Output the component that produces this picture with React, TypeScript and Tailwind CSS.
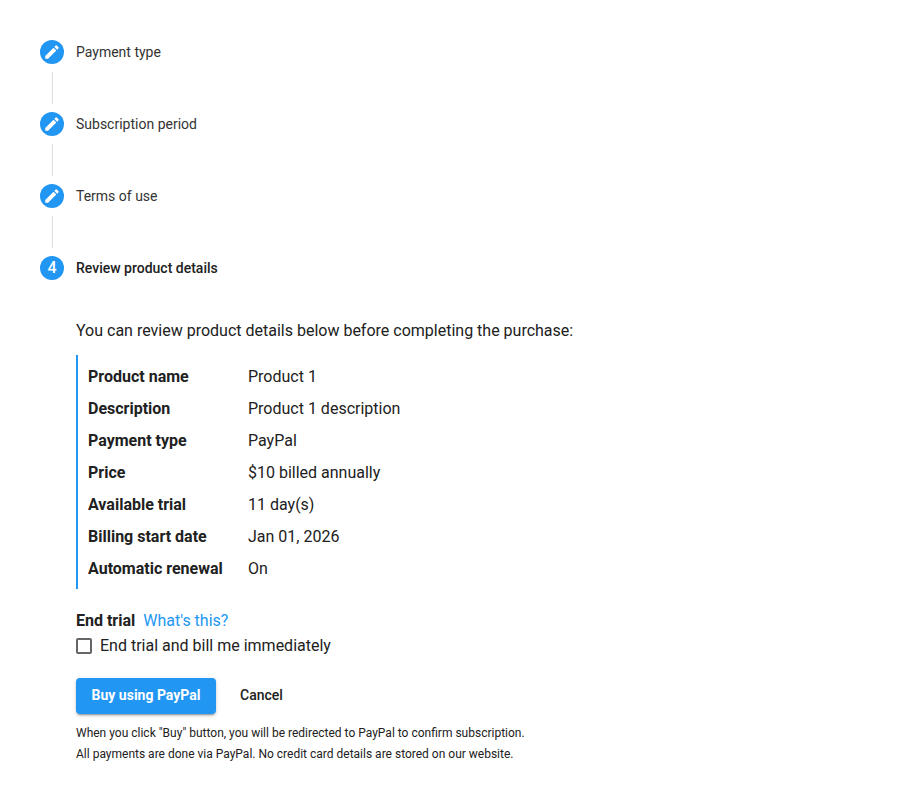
import React from 'react';

const rows = [
  ['Product name', 'Product 1'],
  ['Description', 'Product 1 description'],
  ['Payment type', 'PayPal'],
  ['Price', '$10 billed annually'],
  ['Available trial', '11 day(s)'],
  ['Billing start date', 'Jan 01, 2026'],
  ['Automatic renewal', 'On'],
];

const doneSteps = ['Payment type', 'Subscription period', 'Terms of use'];

function PencilIcon() {
  return (
    <svg viewBox="0 0 24 24" className="w-[18px] h-[18px] fill-white">
      <path d="M3 17.25V21h3.75L17.81 9.94l-3.75-3.75L3 17.25zM20.71 7.04c.39-.39.39-1.02 0-1.41l-2.34-2.34c-.39-.39-1.02-.39-1.41 0l-1.83 1.83 3.75 3.75 1.83-1.83z" />
    </svg>
  );
}

export default function App() {
  return (
    <div className="min-h-screen bg-white px-[40px] py-[40px] font-['Roboto',sans-serif] text-[#212121]">
      {/* completed steps */}
      {doneSteps.map((step) => (
        <div key={step}>
          <div className="flex items-center h-6">
            <div className="w-6 h-6 rounded-full bg-[#2196f3] flex items-center justify-center">
              <PencilIcon />
            </div>
            <span className="ml-3 text-[14px] leading-6 text-[#333333]">{step}</span>
          </div>
          <div className="ml-3 w-px h-8 my-2 bg-[#dedede]"></div>
        </div>
      ))}

      {/* current step */}
      <div className="flex items-center h-6">
        <div className="w-6 h-6 rounded-full bg-[#2196f3] flex items-center justify-center text-white text-[16px] font-medium">
          4
        </div>
        <span className="ml-3 text-[14px] leading-6 font-medium">Review product details</span>
      </div>

      <div className="ml-9 mt-[33px]">
        <p className="text-[16px] leading-[36px] h-[36px]">
          You can review product details below before completing the purchase:
        </p>
        <div className="mt-[6px] border-l-2 border-[#2196f3] pl-[10px] pt-[6px] pb-[4px]">
          {rows.map(([label, value]) => (
            <div key={label} className="flex h-8 items-center text-[16px]">
              <span className="w-[160px] font-bold">{label}</span>
              <span>{value}</span>
            </div>
          ))}
        </div>

        <div className="mt-5 flex items-center h-6 text-[16px]">
          <span className="font-bold">End trial</span>
          <a className="ml-2 text-[#2196f3]">What's this?</a>
        </div>
        <label className="mt-[1px] flex items-center h-6 text-[16px]">
          <span className="w-4 h-4 border-2 border-[#666666] rounded-[2px]"></span>
          <span className="ml-2">End trial and bill me immediately</span>
        </label>

        <div className="mt-5 flex items-center">
          <button className="h-9 w-[140px] pb-[2px] rounded bg-[#2196f3] text-white text-[14px] font-bold shadow-[0_3px_1px_-2px_rgba(0,0,0,0.2),0_2px_2px_0_rgba(0,0,0,0.14),0_1px_5px_0_rgba(0,0,0,0.12)]">
            Buy using PayPal
          </button>
          <button className="ml-2 h-9 pb-[2px] px-4 text-[14px] font-medium">Cancel</button>
        </div>

        <div className="mt-[9px] text-[12px] leading-[21px]">
          <p>When you click "Buy" button, you will be redirected to PayPal to confirm subscription.</p>
          <p>All payments are done via PayPal. No credit card details are stored on our website.</p>
        </div>
      </div>
    </div>
  );
}
